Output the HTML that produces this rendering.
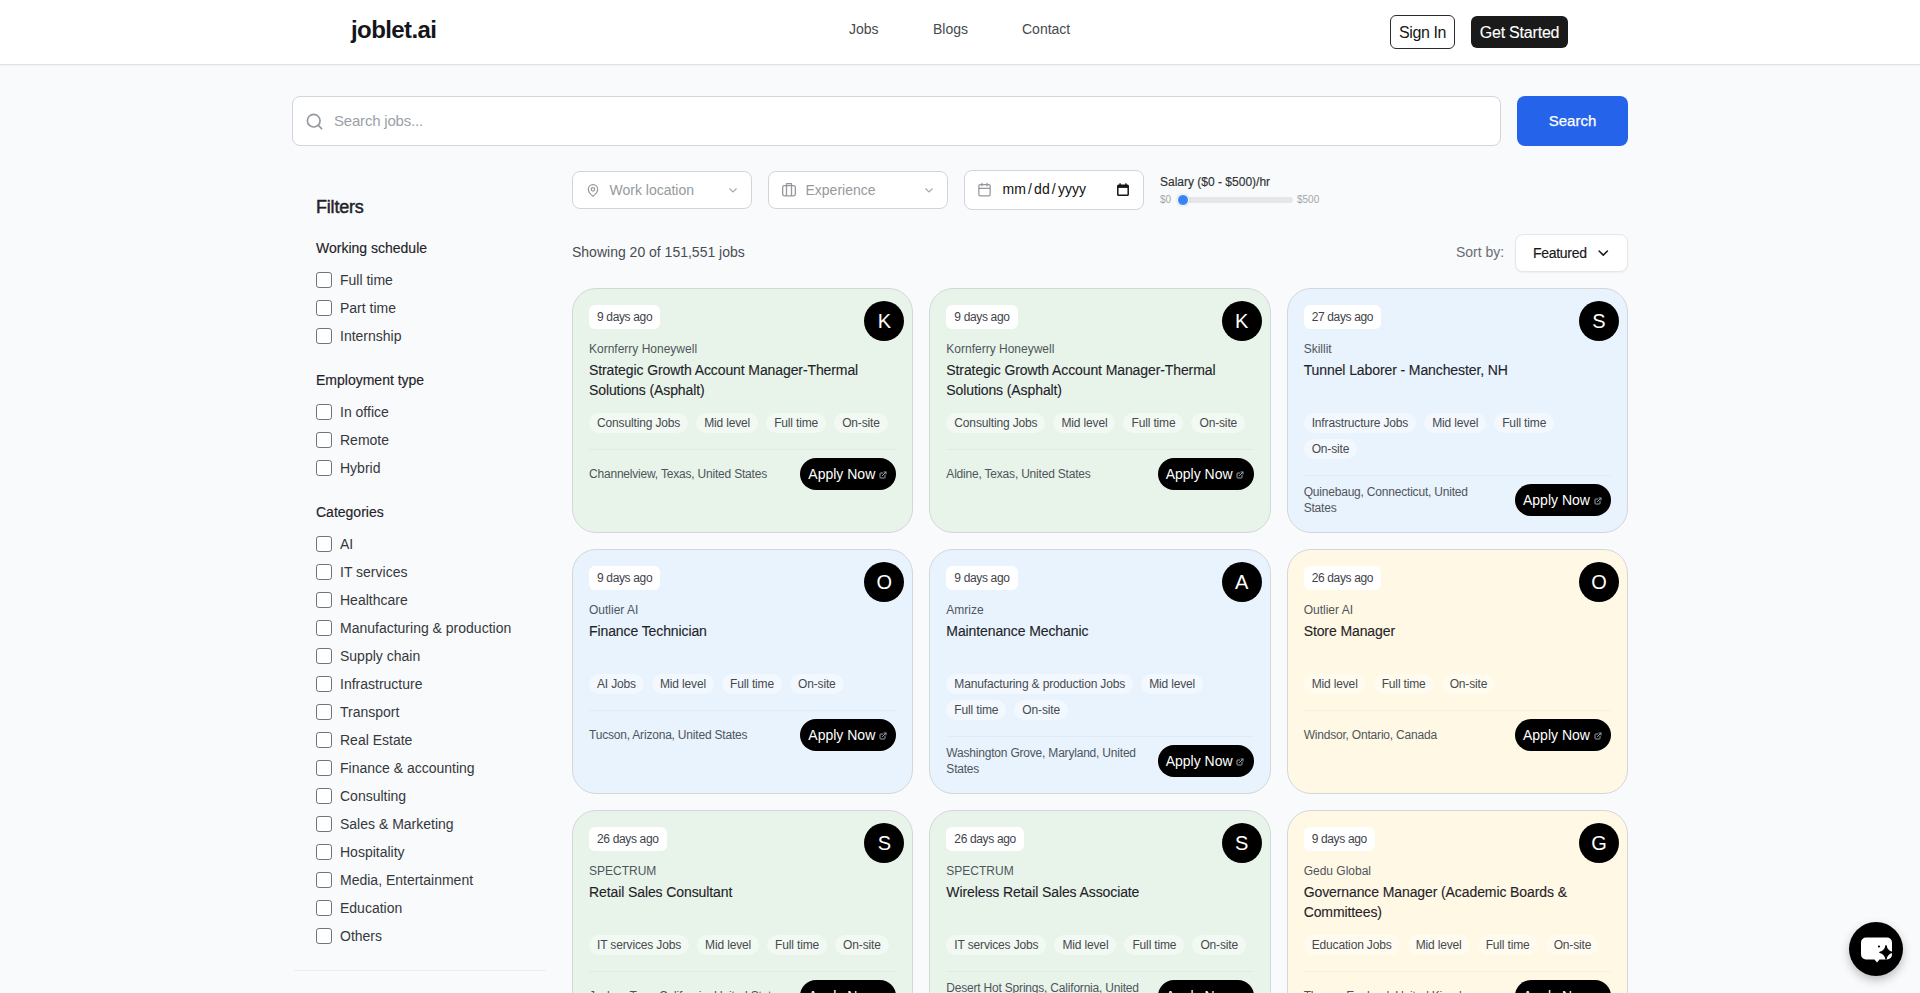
<!DOCTYPE html><html><head><meta charset="utf-8"><style>
*{box-sizing:border-box;margin:0;padding:0}
html,body{width:1920px;height:993px;overflow:hidden;background:#f9fafb;font-family:"Liberation Sans",sans-serif;color:#111827}
.abs{position:absolute}
header{position:absolute;left:0;top:0;width:1920px;height:65px;background:#fff;border-bottom:1px solid #dfe1e4;box-shadow:0 1px 2px rgba(0,0,0,.04)}
.logo{position:absolute;left:351px;top:14.5px;font-size:24px;font-weight:700;color:#14161c;letter-spacing:-0.6px;line-height:30px}
.nav{position:absolute;top:19px;font-size:14px;color:#46494e;line-height:20px}
.signin{position:absolute;left:1390px;top:15px;width:65px;height:34px;border:1px solid #2b2b2b;border-radius:6px;font-size:16px;line-height:33px;text-align:center;color:#171717;letter-spacing:-0.4px;background:#fff}
.getst{position:absolute;left:1471px;top:16px;width:97px;height:32px;background:#1a1a1a;border-radius:6px;font-size:16px;line-height:33.5px;text-align:center;color:#fff;letter-spacing:-0.2px;-webkit-text-stroke:0.1px #fff}
.search{position:absolute;left:292px;top:96px;width:1209px;height:50px;background:#fff;border:1px solid #d1d5db;border-radius:8px}
.search .ph{position:absolute;left:41px;top:14px;font-size:15px;line-height:20px;color:#9b9fa6;letter-spacing:-0.2px}
.sbtn{position:absolute;left:1517px;top:96px;width:111px;height:50px;background:#2563eb;border-radius:8px;color:#fff;font-size:15px;line-height:50px;text-align:center;-webkit-text-stroke:0.25px #fff}
.filters{position:absolute;left:316px;top:196px;font-size:18px;font-weight:400;color:#1f2329;line-height:22px;letter-spacing:-0.2px;-webkit-text-stroke:0.45px #1f2329}
.sh{position:absolute;left:316px;font-size:14px;line-height:20px;color:#1f2329;-webkit-text-stroke:0.15px #1f2329}
.sl{margin:0 2.2px}
.cb{position:absolute;left:316px;width:16px;height:16px;border:1px solid #707378;border-radius:3px;background:#fff}
.cl{position:absolute;left:340px;font-size:14px;line-height:20px;color:#35383d}
.sideline{position:absolute;left:294px;top:970px;width:252px;height:1px;background:#eceef1}
.sel{position:absolute;top:171px;width:180px;height:38px;background:#fff;border:1px solid #d1d5db;border-radius:8px}
.sel .t{position:absolute;left:36.5px;top:7.5px;font-size:14px;line-height:20px;color:#96999e}
.showing{position:absolute;left:572px;top:242px;font-size:14px;line-height:20px;color:#4a4d52}
.sortby{position:absolute;left:1456px;top:242px;font-size:14px;line-height:20px;color:#6a6d72}
.sortsel{position:absolute;left:1515px;top:234px;width:113px;height:38px;background:#fff;border:1px solid #e5e7eb;border-radius:8px;box-shadow:0 1px 2px rgba(0,0,0,.05)}
.sortsel .t{position:absolute;left:17px;top:7.5px;font-size:14px;line-height:20px;letter-spacing:-0.3px;color:#16181b;-webkit-text-stroke:0.15px #16181b}
.card{position:absolute;width:341.33px;height:244.5px;border:1px solid #d4d7d9;border-radius:24px;padding:16px}
.pill{position:absolute;left:16px;top:16px;height:24px;padding:0 8px;background:#fff;border-radius:6px;font-size:12px;line-height:24px;color:#3f434a;letter-spacing:-0.35px}
.av{position:absolute;right:8px;top:12px;width:40px;height:40px;border-radius:50%;background:#000;color:#fff;font-size:20px;line-height:40px;text-align:center}
.co{position:absolute;left:16px;top:52.2px;font-size:12px;line-height:16px;color:#50555c}
.ti{position:absolute;left:16px;top:70.8px;font-size:14px;line-height:20px;color:#1f2329;letter-spacing:-0.1px;-webkit-text-stroke:0.12px #1f2329}
.tags{position:absolute;left:16px;top:124px;width:308px}
.trow{display:flex;gap:8px;height:20px;margin-bottom:6px}
.tag{display:inline-block;height:20px;padding:0 8px;border-radius:10px;background:rgba(255,255,255,.42);font-size:12px;line-height:20px;color:#464a4f;white-space:nowrap;letter-spacing:-0.15px}
.div{position:absolute;left:16px;right:16px;height:1px;background:rgba(0,0,0,.032)}
.foot{position:absolute;left:16px;right:16px;height:32px;display:flex;align-items:center;justify-content:space-between}
.loc{font-size:12px;line-height:16px;color:#50555c;letter-spacing:-0.2px}
.apply{height:32px;width:96px;border-radius:16px;background:#000;color:#fff;font-size:14px;line-height:32px;padding-left:8px;white-space:nowrap}
.apply svg{vertical-align:-0px}
.salary{position:absolute;left:1160px;top:175px;font-size:12px;line-height:14px;color:#2f3237;-webkit-text-stroke:0.15px #2f3237}
.chat{position:absolute;left:1849px;top:922px;width:54px;height:54px;border-radius:50%;background:#000;box-shadow:0 4px 10px rgba(0,0,0,.25)}
</style></head><body>
<header>
<div class="logo">joblet.ai</div>
<div class="nav" style="left:849px">Jobs</div>
<div class="nav" style="left:933px">Blogs</div>
<div class="nav" style="left:1022px">Contact</div>
<div class="signin">Sign In</div>
<div class="getst">Get Started</div>
</header>
<div class="search"><svg class="abs" style="left:12px;top:15px" width="19" height="19" viewBox="0 0 24 24" fill="none" stroke="#94979c" stroke-width="2.1" stroke-linecap="round"><circle cx="11" cy="11" r="8"/><path d="M21 21l-4.3-4.3"/></svg><div class="ph">Search jobs...</div></div>
<div class="sbtn">Search</div>
<div class="filters">Filters</div>
<div class="sh" style="top:238px">Working schedule</div>
<div class="cb" style="top:271.5px"></div><div class="cl" style="top:270px">Full time</div>
<div class="cb" style="top:299.5px"></div><div class="cl" style="top:298px">Part time</div>
<div class="cb" style="top:327.5px"></div><div class="cl" style="top:326px">Internship</div>
<div class="sh" style="top:370px">Employment type</div>
<div class="cb" style="top:403.5px"></div><div class="cl" style="top:402px">In office</div>
<div class="cb" style="top:431.5px"></div><div class="cl" style="top:430px">Remote</div>
<div class="cb" style="top:459.5px"></div><div class="cl" style="top:458px">Hybrid</div>
<div class="sh" style="top:502px">Categories</div>
<div class="cb" style="top:535.5px"></div><div class="cl" style="top:534px">AI</div>
<div class="cb" style="top:563.5px"></div><div class="cl" style="top:562px">IT services</div>
<div class="cb" style="top:591.5px"></div><div class="cl" style="top:590px">Healthcare</div>
<div class="cb" style="top:619.5px"></div><div class="cl" style="top:618px">Manufacturing &amp; production</div>
<div class="cb" style="top:647.5px"></div><div class="cl" style="top:646px">Supply chain</div>
<div class="cb" style="top:675.5px"></div><div class="cl" style="top:674px">Infrastructure</div>
<div class="cb" style="top:703.5px"></div><div class="cl" style="top:702px">Transport</div>
<div class="cb" style="top:731.5px"></div><div class="cl" style="top:730px">Real Estate</div>
<div class="cb" style="top:759.5px"></div><div class="cl" style="top:758px">Finance &amp; accounting</div>
<div class="cb" style="top:787.5px"></div><div class="cl" style="top:786px">Consulting</div>
<div class="cb" style="top:815.5px"></div><div class="cl" style="top:814px">Sales &amp; Marketing</div>
<div class="cb" style="top:843.5px"></div><div class="cl" style="top:842px">Hospitality</div>
<div class="cb" style="top:871.5px"></div><div class="cl" style="top:870px">Media, Entertainment</div>
<div class="cb" style="top:899.5px"></div><div class="cl" style="top:898px">Education</div>
<div class="cb" style="top:927.5px"></div><div class="cl" style="top:926px">Others</div>
<div class="sideline"></div>
<div class="sel" style="left:572px"><svg class="abs" style="left:13px;top:10.5px" width="14" height="15" viewBox="0 0 24 24" fill="none" stroke="#94979c" stroke-width="2" stroke-linecap="round" stroke-linejoin="round"><path d="M20 10c0 6-8 12-8 12s-8-6-8-12a8 8 0 0 1 16 0Z"/><circle cx="12" cy="10" r="3"/></svg><div class="t">Work location</div><svg class="abs" style="left:155px;top:14.5px" width="10" height="7" viewBox="0 0 10 7" fill="none" stroke="#a3a6ab" stroke-width="1.1"><path d="M1.5 1.5l3.5 3.5 3.5-3.5"/></svg></div>
<div class="sel" style="left:768px"><svg class="abs" style="left:12.5px;top:10.5px" width="14" height="14" viewBox="0 0 14 14" fill="none" stroke="#94979c" stroke-width="1.3" stroke-linejoin="round"><rect x="0.65" y="2.65" width="12.7" height="10.2" rx="1.8"/><path d="M4.5 12.8V0.65h5V12.8"/></svg><div class="t">Experience</div><svg class="abs" style="left:155px;top:14.5px" width="10" height="7" viewBox="0 0 10 7" fill="none" stroke="#a3a6ab" stroke-width="1.1"><path d="M1.5 1.5l3.5 3.5 3.5-3.5"/></svg></div>
<div class="sel" style="left:964px;top:170px;height:40px"><svg class="abs" style="left:12px;top:11px" width="15" height="15" viewBox="0 0 24 24" fill="none" stroke="#94979c" stroke-width="2" stroke-linecap="round" stroke-linejoin="round"><rect x="3" y="4" width="18" height="18" rx="2"/><path d="M16 2v4M8 2v4M3 10h18"/></svg><div class="t" style="color:#111;top:8px;left:37.5px">mm<span class="sl">/</span>dd<span class="sl">/</span>yyyy</div><svg class="abs" style="left:151.5px;top:12px" width="12" height="13" viewBox="0 0 12 13"><rect x="0.8" y="2.3" width="10.4" height="9.9" rx="0.8" fill="none" stroke="#151515" stroke-width="1.5"/><rect x="0.8" y="2.3" width="10.4" height="2.6" fill="#151515"/><rect x="2.4" y="0.3" width="1.4" height="2.6" fill="#151515"/><rect x="8.2" y="0.3" width="1.4" height="2.6" fill="#151515"/></svg></div>
<div class="salary">Salary ($0 - $500)/hr</div>
<div class="abs" style="left:1160px;top:194px;font-size:10px;line-height:12px;color:#a3a6ab">$0</div>
<div class="abs" style="left:1183px;top:197px;width:110px;height:6px;border-radius:3px;background:#e5e7eb"></div>
<div class="abs" style="left:1177px;top:194px;width:12px;height:12px;border-radius:50%;background:#3b82f6;border:1.5px solid #fff;box-shadow:0 0 2px rgba(0,0,0,.2)"></div>
<div class="abs" style="left:1297px;top:194px;font-size:10px;line-height:12px;color:#a3a6ab">$500</div>
<div class="showing">Showing 20 of 151,551 jobs</div>
<div class="sortby">Sort by:</div>
<div class="sortsel"><div class="t">Featured</div><svg class="abs" style="left:82px;top:15px" width="10.5" height="6.5" viewBox="0 0 11 7" fill="none" stroke="#16181b" stroke-width="1.6" stroke-linecap="round" stroke-linejoin="round"><path d="M1 1l4.5 4.5L10 1"/></svg></div>
<div class="card" style="left:572px;top:288px;background:#e8f4e9">
<div class="pill">9 days ago</div><div class="av">K</div>
<div class="co">Kornferry Honeywell</div><div class="ti">Strategic Growth Account Manager-Thermal<br>Solutions (Asphalt)</div>
<div class="tags"><div class="trow"><span class="tag">Consulting Jobs</span><span class="tag">Mid level</span><span class="tag">Full time</span><span class="tag">On-site</span></div></div>
<div class="div" style="top:160px"></div>
<div class="foot" style="top:169px"><div class="loc">Channelview, Texas, United States</div><div class="apply">Apply Now <svg width="8" height="8" viewBox="0 0 24 24" fill="none" stroke="#9ca3af" stroke-width="3" stroke-linecap="round" stroke-linejoin="round"><path d="M18 13v6a2 2 0 0 1-2 2H5a2 2 0 0 1-2-2V8a2 2 0 0 1 2-2h6"/><path d="M15 3h6v6"/><path d="M10 14L21 3"/></svg></div></div>
</div><div class="card" style="left:929.33px;top:288px;background:#e8f4e9">
<div class="pill">9 days ago</div><div class="av">K</div>
<div class="co">Kornferry Honeywell</div><div class="ti">Strategic Growth Account Manager-Thermal<br>Solutions (Asphalt)</div>
<div class="tags"><div class="trow"><span class="tag">Consulting Jobs</span><span class="tag">Mid level</span><span class="tag">Full time</span><span class="tag">On-site</span></div></div>
<div class="div" style="top:160px"></div>
<div class="foot" style="top:169px"><div class="loc">Aldine, Texas, United States</div><div class="apply">Apply Now <svg width="8" height="8" viewBox="0 0 24 24" fill="none" stroke="#9ca3af" stroke-width="3" stroke-linecap="round" stroke-linejoin="round"><path d="M18 13v6a2 2 0 0 1-2 2H5a2 2 0 0 1-2-2V8a2 2 0 0 1 2-2h6"/><path d="M15 3h6v6"/><path d="M10 14L21 3"/></svg></div></div>
</div><div class="card" style="left:1286.67px;top:288px;background:#e8f3fd">
<div class="pill">27 days ago</div><div class="av">S</div>
<div class="co">Skillit</div><div class="ti">Tunnel Laborer - Manchester, NH</div>
<div class="tags"><div class="trow"><span class="tag">Infrastructure Jobs</span><span class="tag">Mid level</span><span class="tag">Full time</span></div><div class="trow"><span class="tag">On-site</span></div></div>
<div class="div" style="top:186px"></div>
<div class="foot" style="top:195px"><div class="loc">Quinebaug, Connecticut, United<br>States</div><div class="apply">Apply Now <svg width="8" height="8" viewBox="0 0 24 24" fill="none" stroke="#9ca3af" stroke-width="3" stroke-linecap="round" stroke-linejoin="round"><path d="M18 13v6a2 2 0 0 1-2 2H5a2 2 0 0 1-2-2V8a2 2 0 0 1 2-2h6"/><path d="M15 3h6v6"/><path d="M10 14L21 3"/></svg></div></div>
</div><div class="card" style="left:572px;top:549px;background:#e8f3fd">
<div class="pill">9 days ago</div><div class="av">O</div>
<div class="co">Outlier AI</div><div class="ti">Finance Technician</div>
<div class="tags"><div class="trow"><span class="tag">AI Jobs</span><span class="tag">Mid level</span><span class="tag">Full time</span><span class="tag">On-site</span></div></div>
<div class="div" style="top:160px"></div>
<div class="foot" style="top:169px"><div class="loc">Tucson, Arizona, United States</div><div class="apply">Apply Now <svg width="8" height="8" viewBox="0 0 24 24" fill="none" stroke="#9ca3af" stroke-width="3" stroke-linecap="round" stroke-linejoin="round"><path d="M18 13v6a2 2 0 0 1-2 2H5a2 2 0 0 1-2-2V8a2 2 0 0 1 2-2h6"/><path d="M15 3h6v6"/><path d="M10 14L21 3"/></svg></div></div>
</div><div class="card" style="left:929.33px;top:549px;background:#e8f3fd">
<div class="pill">9 days ago</div><div class="av">A</div>
<div class="co">Amrize</div><div class="ti">Maintenance Mechanic</div>
<div class="tags"><div class="trow"><span class="tag">Manufacturing &amp; production Jobs</span><span class="tag">Mid level</span></div><div class="trow"><span class="tag">Full time</span><span class="tag">On-site</span></div></div>
<div class="div" style="top:186px"></div>
<div class="foot" style="top:195px"><div class="loc">Washington Grove, Maryland, United<br>States</div><div class="apply">Apply Now <svg width="8" height="8" viewBox="0 0 24 24" fill="none" stroke="#9ca3af" stroke-width="3" stroke-linecap="round" stroke-linejoin="round"><path d="M18 13v6a2 2 0 0 1-2 2H5a2 2 0 0 1-2-2V8a2 2 0 0 1 2-2h6"/><path d="M15 3h6v6"/><path d="M10 14L21 3"/></svg></div></div>
</div><div class="card" style="left:1286.67px;top:549px;background:#fff8e4">
<div class="pill">26 days ago</div><div class="av">O</div>
<div class="co">Outlier AI</div><div class="ti">Store Manager</div>
<div class="tags"><div class="trow"><span class="tag">Mid level</span><span class="tag">Full time</span><span class="tag">On-site</span></div></div>
<div class="div" style="top:160px"></div>
<div class="foot" style="top:169px"><div class="loc">Windsor, Ontario, Canada</div><div class="apply">Apply Now <svg width="8" height="8" viewBox="0 0 24 24" fill="none" stroke="#9ca3af" stroke-width="3" stroke-linecap="round" stroke-linejoin="round"><path d="M18 13v6a2 2 0 0 1-2 2H5a2 2 0 0 1-2-2V8a2 2 0 0 1 2-2h6"/><path d="M15 3h6v6"/><path d="M10 14L21 3"/></svg></div></div>
</div><div class="card" style="left:572px;top:810px;background:#e8f4e9">
<div class="pill">26 days ago</div><div class="av">S</div>
<div class="co">SPECTRUM</div><div class="ti">Retail Sales Consultant</div>
<div class="tags"><div class="trow"><span class="tag">IT services Jobs</span><span class="tag">Mid level</span><span class="tag">Full time</span><span class="tag">On-site</span></div></div>
<div class="div" style="top:160px"></div>
<div class="foot" style="top:169px"><div class="loc">Joshua Tree, California, United States</div><div class="apply">Apply Now <svg width="8" height="8" viewBox="0 0 24 24" fill="none" stroke="#9ca3af" stroke-width="3" stroke-linecap="round" stroke-linejoin="round"><path d="M18 13v6a2 2 0 0 1-2 2H5a2 2 0 0 1-2-2V8a2 2 0 0 1 2-2h6"/><path d="M15 3h6v6"/><path d="M10 14L21 3"/></svg></div></div>
</div><div class="card" style="left:929.33px;top:810px;background:#e8f4e9">
<div class="pill">26 days ago</div><div class="av">S</div>
<div class="co">SPECTRUM</div><div class="ti">Wireless Retail Sales Associate</div>
<div class="tags"><div class="trow"><span class="tag">IT services Jobs</span><span class="tag">Mid level</span><span class="tag">Full time</span><span class="tag">On-site</span></div></div>
<div class="div" style="top:160px"></div>
<div class="foot" style="top:169px"><div class="loc">Desert Hot Springs, California, United<br>States</div><div class="apply">Apply Now <svg width="8" height="8" viewBox="0 0 24 24" fill="none" stroke="#9ca3af" stroke-width="3" stroke-linecap="round" stroke-linejoin="round"><path d="M18 13v6a2 2 0 0 1-2 2H5a2 2 0 0 1-2-2V8a2 2 0 0 1 2-2h6"/><path d="M15 3h6v6"/><path d="M10 14L21 3"/></svg></div></div>
</div><div class="card" style="left:1286.67px;top:810px;background:#fff8e4">
<div class="pill">9 days ago</div><div class="av">G</div>
<div class="co">Gedu Global</div><div class="ti">Governance Manager (Academic Boards &amp;<br>Committees)</div>
<div class="tags"><div class="trow"><span class="tag">Education Jobs</span><span class="tag">Mid level</span><span class="tag">Full time</span><span class="tag">On-site</span></div></div>
<div class="div" style="top:160px"></div>
<div class="foot" style="top:169px"><div class="loc">Thame, England, United Kingdom</div><div class="apply">Apply Now <svg width="8" height="8" viewBox="0 0 24 24" fill="none" stroke="#9ca3af" stroke-width="3" stroke-linecap="round" stroke-linejoin="round"><path d="M18 13v6a2 2 0 0 1-2 2H5a2 2 0 0 1-2-2V8a2 2 0 0 1 2-2h6"/><path d="M15 3h6v6"/><path d="M10 14L21 3"/></svg></div></div>
</div>
<div class="chat"><svg class="abs" style="left:12px;top:15px" width="34" height="28" viewBox="0 0 34 28"><path d="M5 0.5h21a5 5 0 0 1 5 5v12a5 5 0 0 1-5 5H18.5l-2.5 3-2.5-3H5a5 5 0 0 1-5-5v-12a5 5 0 0 1 5-5z" fill="#fff"/><path d="M25 8.5c0.6 3.6 2.2 5.8 6.2 6.8-4 1-5.6 3.2-6.2 6.8-0.6-3.6-2.2-5.8-6.2-6.8 4-1 5.6-3.2 6.2-6.8z" fill="#000" stroke="#000" stroke-width="1.2" stroke-linejoin="round"/><circle cx="18" cy="9.5" r="1.1" fill="#000"/></svg></div>
</body></html>
